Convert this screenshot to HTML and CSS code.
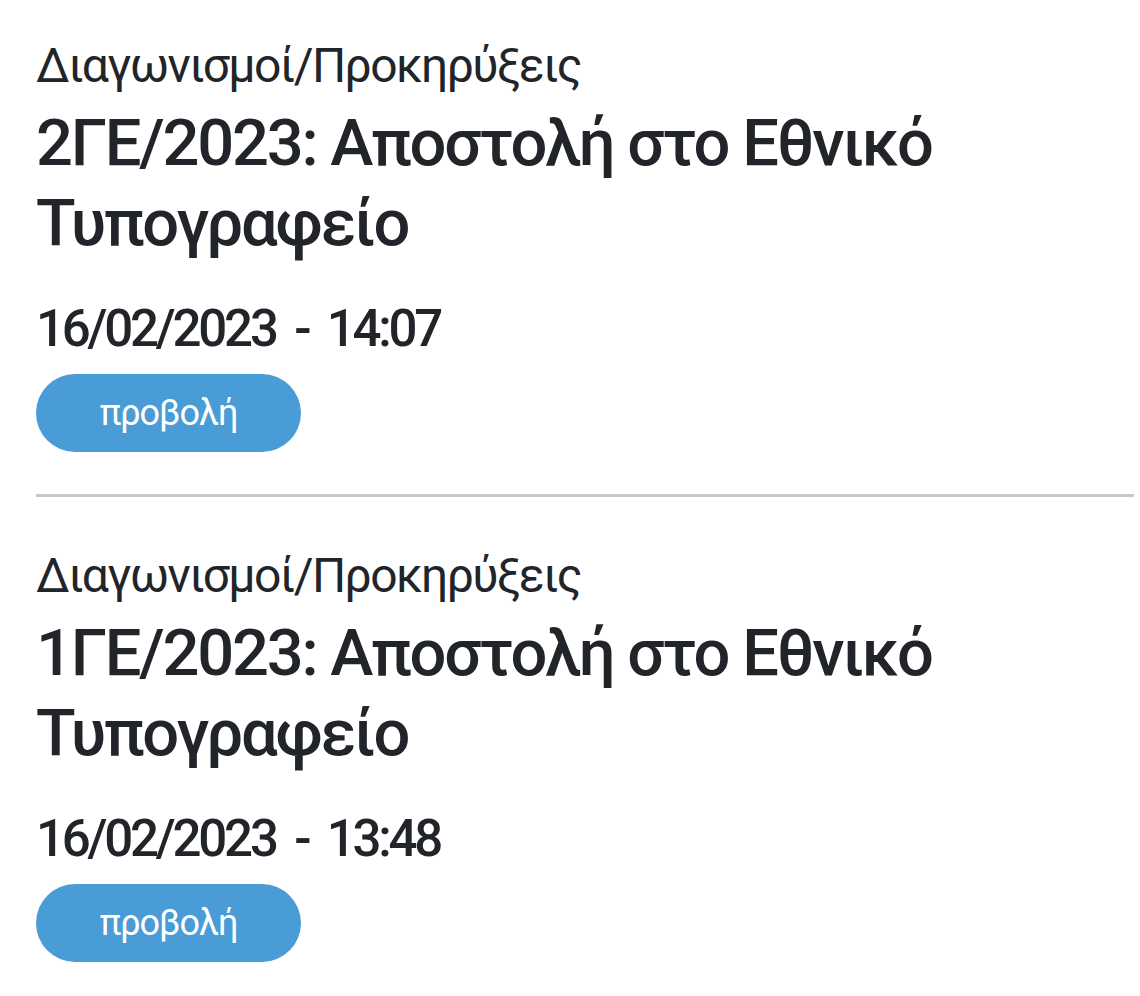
FILE: index.html
```html
<!DOCTYPE html>
<html lang="el">
<head>
<meta charset="utf-8">
<title>Διαγωνισμοί/Προκηρύξεις</title>
<link rel="stylesheet" href="styles.css">
</head>
<body>
<main class="list">
  <article class="item">
    <div class="category">Διαγωνισμοί/Προκηρύξεις</div>
    <h2 class="title">2ΓΕ/2023: Αποστολή στο Εθνικό Τυπογραφείο</h2>
    <div class="date">16/02/2023 - 14:07</div>
    <a class="btn" href="#">προβολή</a>
  </article>
  <article class="item">
    <div class="category">Διαγωνισμοί/Προκηρύξεις</div>
    <h2 class="title">1ΓΕ/2023: Αποστολή στο Εθνικό Τυπογραφείο</h2>
    <div class="date">16/02/2023 - 13:48</div>
    <a class="btn" href="#">προβολή</a>
  </article>
</main>
</body>
</html>
```

FILE: styles.css
```css
html, body {
  margin: 0;
  padding: 0;
  background: #ffffff;
}

body {
  font-family: Roboto, "Liberation Sans", sans-serif;
  color: #212529;
}

.list {
  padding: 0 6px 0 36px;
}

.item {
  display: flex;
  flex-direction: column;
  align-items: flex-start;
  padding: 38px 0 42px;
}

.item + .item {
  border-top: 3px solid #c8c8c8;
  padding-top: 51px;
}

.category {
  font-size: 48px;
  line-height: 56px;
  font-weight: 400;
  letter-spacing: -1.6px;
}

.title {
  margin: 9px 0 0;
  font-size: 65px;
  line-height: 80px;
  font-weight: 500;
  letter-spacing: -2.2px;
  max-width: 1000px;
}

.date {
  margin-top: 36px;
  font-size: 51px;
  line-height: 60px;
  font-weight: 500;
  letter-spacing: -3.2px;
  word-spacing: 9px;
}

.btn {
  margin-top: 15px;
  width: 265px;
  height: 78px;
  border-radius: 39px;
  background: #4a9cd6;
  color: #ffffff;
  text-decoration: none;
  font-size: 36px;
  letter-spacing: -1px;
  display: flex;
  align-items: center;
  justify-content: center;
}
```
